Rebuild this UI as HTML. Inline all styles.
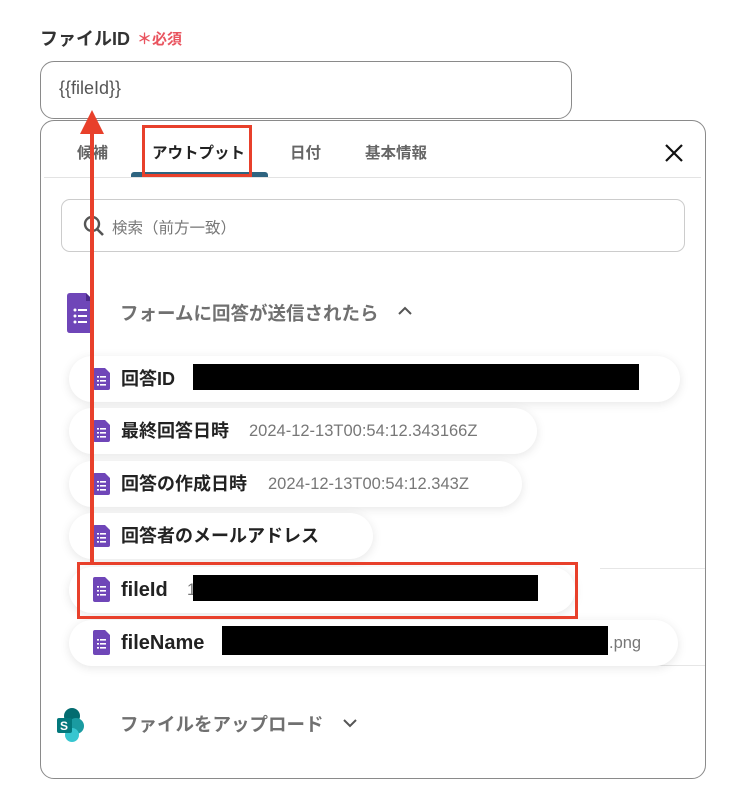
<!DOCTYPE html>
<html><head><meta charset="utf-8"><style>
*{box-sizing:border-box;margin:0;padding:0}
body{width:732px;height:808px;background:#fff;position:relative;overflow:hidden;font-family:"Liberation Sans","Noto Sans CJK JP",sans-serif}
.a{position:absolute}
.pill{position:absolute;left:69px;height:46px;background:#fff;border-radius:23px;box-shadow:0 2px 10px rgba(0,0,0,0.10)}
.pill .t{position:absolute;left:52px;top:0;line-height:46px;font-size:18px;font-weight:bold;color:#222;white-space:nowrap}
.pill .v{position:absolute;top:0;line-height:46px;font-size:16.5px;color:#777;white-space:nowrap}
.ic{position:absolute;left:24px;top:12px}
.blk{position:absolute;background:#000}
</style></head><body>
<div class="a" style="left:40px;top:25px;font-size:18px;font-weight:bold;color:#333">ファイルID</div>
<div class="a" style="left:137px;top:28px;font-size:15px;font-weight:bold;color:#e9545f">＊必須</div>
<div class="a" style="left:40px;top:61px;width:532px;height:58px;border:1px solid #8a8a8a;border-radius:14px"></div>
<div class="a" style="left:59px;top:78px;font-size:18px;color:#555">{{fileId}}</div>
<div class="a" style="left:40px;top:120px;width:666px;height:659px;border:1px solid #8a8a8a;border-radius:14px;background:#fff"></div>
<div class="a" style="left:44px;top:177px;width:657px;height:1px;background:#e3e3e3"></div>
<div class="a" style="left:131px;top:172px;width:137px;height:5px;background:#2e6480;border-radius:3px 3px 0 0"></div>
<div class="a" style="left:77px;top:141px;font-size:15.5px;font-weight:bold;color:#666">候補</div>
<div class="a" style="left:152px;top:141px;font-size:15.5px;font-weight:bold;color:#222">アウトプット</div>
<div class="a" style="left:290px;top:141px;font-size:15.5px;font-weight:bold;color:#666">日付</div>
<div class="a" style="left:365px;top:141px;font-size:15.5px;font-weight:bold;color:#666">基本情報</div>
<svg class="a" style="left:663px;top:142px" width="22" height="22"><path d="M3 3L19 19M19 3L3 19" stroke="#111" stroke-width="2.2"/></svg>
<div class="a" style="left:61px;top:199px;width:624px;height:53px;border:1px solid #ccc;border-radius:9px"></div>
<svg class="a" style="left:83px;top:215px" width="24" height="24"><circle cx="9" cy="9" r="7" stroke="#555" stroke-width="2.4" fill="none"/><path d="M14 14L20 20" stroke="#555" stroke-width="2.6"/></svg>
<div class="a" style="left:112px;top:216px;font-size:15.5px;color:#777">検索（前方一致）</div>
<div class="a" style="left:600px;top:568px;width:105px;height:1px;background:#e6e6e6"></div>
<div class="a" style="left:600px;top:665px;width:105px;height:1px;background:#e6e6e6"></div>
<svg class="a" style="left:67px;top:293px" width="28" height="40"><path d="M3 0H19L27 8V37Q27 40 24 40H3Q0 40 0 37V3Q0 0 3 0Z" fill="#6f46b8"/><path d="M19 0V8H27Z" fill="#4b2a8a"/><g fill="#fff"><circle cx="8" cy="17" r="1.5"/><circle cx="8" cy="23" r="1.5"/><circle cx="8" cy="29" r="1.5"/><rect x="11" y="16" width="9" height="2"/><rect x="11" y="22" width="9" height="2"/><rect x="11" y="28" width="9" height="2"/></g></svg>
<div class="a" style="left:120px;top:300px;font-size:18.5px;font-weight:bold;color:#707070">フォームに回答が送信されたら</div>
<svg class="a" style="left:397px;top:305px" width="16" height="12"><path d="M2 9L8 3L14 9" stroke="#555" stroke-width="2" fill="none"/></svg>

<div class="pill" style="top:356px;width:611px"><svg class="ic" width="17" height="22"><path d="M2 0H12L17 5V20Q17 22 15 22H2Q0 22 0 20V2Q0 0 2 0Z" fill="#6f46b8"/><g fill="#fff"><rect x="4" y="8" width="2" height="1.6"/><rect x="4" y="12" width="2" height="1.6"/><rect x="4" y="16" width="2" height="1.6"/><rect x="7" y="8" width="6" height="1.6"/><rect x="7" y="12" width="6" height="1.6"/><rect x="7" y="16" width="6" height="1.6"/></g></svg><div class="t">回答ID</div></div>
<div class="blk" style="left:193px;top:364px;width:446px;height:26px"></div>
<div class="pill" style="top:408px;width:468px"><svg class="ic" width="17" height="22"><path d="M2 0H12L17 5V20Q17 22 15 22H2Q0 22 0 20V2Q0 0 2 0Z" fill="#6f46b8"/><g fill="#fff"><rect x="4" y="8" width="2" height="1.6"/><rect x="4" y="12" width="2" height="1.6"/><rect x="4" y="16" width="2" height="1.6"/><rect x="7" y="8" width="6" height="1.6"/><rect x="7" y="12" width="6" height="1.6"/><rect x="7" y="16" width="6" height="1.6"/></g></svg><div class="t">最終回答日時</div><div class="v" style="left:180px">2024-12-13T00:54:12.343166Z</div></div>
<div class="pill" style="top:461px;width:453px"><svg class="ic" width="17" height="22"><path d="M2 0H12L17 5V20Q17 22 15 22H2Q0 22 0 20V2Q0 0 2 0Z" fill="#6f46b8"/><g fill="#fff"><rect x="4" y="8" width="2" height="1.6"/><rect x="4" y="12" width="2" height="1.6"/><rect x="4" y="16" width="2" height="1.6"/><rect x="7" y="8" width="6" height="1.6"/><rect x="7" y="12" width="6" height="1.6"/><rect x="7" y="16" width="6" height="1.6"/></g></svg><div class="t">回答の作成日時</div><div class="v" style="left:199px">2024-12-13T00:54:12.343Z</div></div>
<div class="pill" style="top:513px;width:304px"><svg class="ic" width="17" height="22"><path d="M2 0H12L17 5V20Q17 22 15 22H2Q0 22 0 20V2Q0 0 2 0Z" fill="#6f46b8"/><g fill="#fff"><rect x="4" y="8" width="2" height="1.6"/><rect x="4" y="12" width="2" height="1.6"/><rect x="4" y="16" width="2" height="1.6"/><rect x="7" y="8" width="6" height="1.6"/><rect x="7" y="12" width="6" height="1.6"/><rect x="7" y="16" width="6" height="1.6"/></g></svg><div class="t">回答者のメールアドレス</div></div>
<div class="pill" style="top:567px;width:506px"><svg class="ic" width="17" height="25" style="top:10px"><path d="M2 0H12L17 5V23Q17 25 15 25H2Q0 25 0 23V2Q0 0 2 0Z" fill="#6f46b8"/><g fill="#fff"><rect x="4" y="9" width="2" height="1.6"/><rect x="4" y="13" width="2" height="1.6"/><rect x="4" y="17" width="2" height="1.6"/><rect x="7" y="9" width="6" height="1.6"/><rect x="7" y="13" width="6" height="1.6"/><rect x="7" y="17" width="6" height="1.6"/></g></svg><div class="t" style="font-size:20px">fileId</div><div class="v" style="left:118px">1</div></div>
<div class="blk" style="left:193px;top:575px;width:345px;height:26px"></div>
<div class="pill" style="top:620px;width:609px"><svg class="ic" width="17" height="25" style="top:10px"><path d="M2 0H12L17 5V23Q17 25 15 25H2Q0 25 0 23V2Q0 0 2 0Z" fill="#6f46b8"/><g fill="#fff"><rect x="4" y="9" width="2" height="1.6"/><rect x="4" y="13" width="2" height="1.6"/><rect x="4" y="17" width="2" height="1.6"/><rect x="7" y="9" width="6" height="1.6"/><rect x="7" y="13" width="6" height="1.6"/><rect x="7" y="17" width="6" height="1.6"/></g></svg><div class="t" style="font-size:20px">fileName</div><div class="v" style="left:540px">.png</div></div>
<div class="blk" style="left:222px;top:626px;width:386px;height:29px"></div>

<svg class="a" style="left:56px;top:707px" width="30" height="36"><circle cx="16" cy="9" r="8" fill="#036c70"/><circle cx="20" cy="19" r="8" fill="#1a9ba1"/><circle cx="16" cy="28" r="7" fill="#37c6d0"/><rect x="1" y="11" width="15" height="15" rx="2" fill="#03787c"/><text x="4" y="23" font-size="12" font-weight="bold" fill="#fff" font-family="Liberation Sans">S</text></svg>
<div class="a" style="left:120px;top:711px;font-size:18.5px;font-weight:bold;color:#707070">ファイルをアップロード</div>
<svg class="a" style="left:342px;top:717px" width="16" height="12"><path d="M2 3L8 9L14 3" stroke="#555" stroke-width="2" fill="none"/></svg>

<div class="a" style="left:142px;top:125px;width:110px;height:52px;border:3px solid #e8402b"></div>
<div class="a" style="left:77px;top:562px;width:501px;height:57px;border:3px solid #e8402b"></div>
<div class="a" style="left:90px;top:128px;width:4px;height:437px;background:#e8402b"></div>
<svg class="a" style="left:78px;top:109px" width="28" height="26"><path d="M14 1L26 25H2Z" fill="#e8402b"/></svg>
</body></html>
